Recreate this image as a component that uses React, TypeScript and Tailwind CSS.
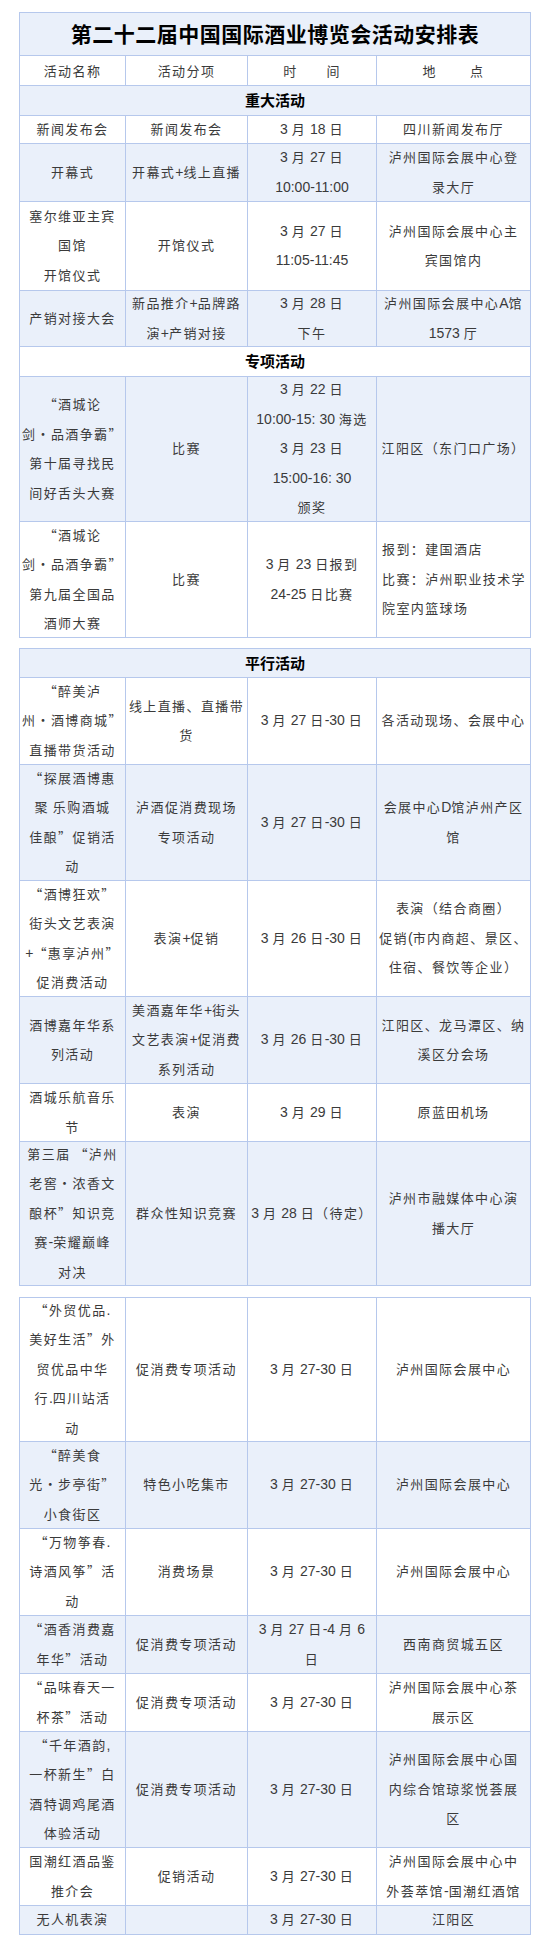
import React from "react";

type Cell = string | string[];
type RowT =
  | { kind: "row"; h: string; blue: boolean; cells: Cell[]; leftLast?: boolean }
  | { kind: "section"; h: string; blue: boolean; text: string }
  | { kind: "title"; h: string; text: string }
  | { kind: "header"; h: string };

const widths = ["w-[106px]", "w-[122px]", "w-[129px]", "flex-1 min-w-0"];

function Mixed({ s }: { s: string }) {
  const parts = s.split(/([\x00-\x7F]+)/).filter((p) => p.length > 0);
  return (
    <>
      {parts.map((p, i) =>
        /^[\x00-\x7F]+$/.test(p) ? (
          <span key={i} className="text-[14px] tracking-normal font-['Liberation_Sans',sans-serif]">
            {p}
          </span>
        ) : (
          <span key={i} className="font-['Noto_Sans_CJK_SC',sans-serif]">
            {p}
          </span>
        )
      )}
    </>
  );
}

function DataRow({ r }: { r: Extract<RowT, { kind: "row" }> }) {
  return (
    <div className={`flex ${r.h} ${r.blue ? "bg-[#eaf0fa]" : "bg-white"}`}>
      {r.cells.map((c, i) => {
        const lines = Array.isArray(c) ? c : [c];
        const left = r.leftLast && i === 3;
        return (
          <div
            key={i}
            className={`${widths[i]} border-r border-b border-[#b6c8ec] flex flex-col justify-center ${
              left ? "items-start text-left pl-[5px]" : "items-center text-center"
            } leading-[28.5px]`}
          >
            {lines.map((l, j) => (
              <div key={j} className="whitespace-nowrap">
                <Mixed s={l} />
              </div>
            ))}
          </div>
        );
      })}
    </div>
  );
}

function Table({ rows }: { rows: RowT[] }) {
  return (
    <div className="border-l border-t border-[#b6c8ec]">
      {rows.map((r, idx) => {
        if (r.kind === "row") return <DataRow key={idx} r={r} />;
        if (r.kind === "title")
          return (
            <div
              key={idx}
              className={`${r.h} bg-[#eaf0fa] border-r border-b border-[#b6c8ec] flex items-center justify-center text-[21px] font-bold text-black tracking-[0.5px] font-['Noto_Sans_CJK_SC',sans-serif]`}
            >
              {r.text}
            </div>
          );
        if (r.kind === "section")
          return (
            <div
              key={idx}
              className={`${r.h} ${r.blue ? "bg-[#eaf0fa]" : "bg-white"} border-r border-b border-[#b6c8ec] flex items-center justify-center text-[15px] font-bold text-black tracking-normal font-['Noto_Sans_CJK_SC',sans-serif]`}
            >
              {r.text}
            </div>
          );
        return (
          <div key={idx} className={`flex ${r.h} bg-white`}>
            {["活动名称", "活动分项", "时　　间", "地　　 点"].map((t, i) => (
              <div
                key={i}
                className={`${widths[i]} border-r border-b border-[#b6c8ec] flex items-center justify-center whitespace-pre font-['Noto_Sans_CJK_SC',sans-serif]`}
              >
                {t}
              </div>
            ))}
          </div>
        );
      })}
    </div>
  );
}

const t1: RowT[] = [
  { kind: "title", h: "h-[43px]", text: "第二十二届中国国际酒业博览会活动安排表" },
  { kind: "header", h: "h-[30px]" },
  { kind: "section", h: "h-[30px]", blue: true, text: "重大活动" },
  { kind: "row", h: "h-[28px]", blue: false, cells: ["新闻发布会", "新闻发布会", "3 月 18 日", "四川新闻发布厅"] },
  {
    kind: "row",
    h: "h-[58px]",
    blue: true,
    cells: ["开幕式", "开幕式+线上直播", ["3 月 27 日", "10:00-11:00"], ["泸州国际会展中心登", "录大厅"]],
  },
  {
    kind: "row",
    h: "h-[89px]",
    blue: false,
    cells: [["塞尔维亚主宾", "国馆", "开馆仪式"], "开馆仪式", ["3 月 27 日", "11:05-11:45"], ["泸州国际会展中心主", "宾国馆内"]],
  },
  {
    kind: "row",
    h: "h-[56px]",
    blue: true,
    cells: ["产销对接大会", ["新品推介+品牌路", "演+产销对接"], ["3 月 28 日", "下午"], ["泸州国际会展中心A馆", "1573 厅"]],
  },
  { kind: "section", h: "h-[30px]", blue: false, text: "专项活动" },
  {
    kind: "row",
    h: "h-[145px]",
    blue: true,
    cells: [
      ["“酒城论", "剑•品酒争霸”", "第十届寻找民", "间好舌头大赛"],
      "比赛",
      ["3 月 22 日", "10:00-15: 30 海选", "3 月 23 日", "15:00-16: 30", "颁奖"],
      "江阳区（东门口广场）",
    ],
  },
  {
    kind: "row",
    h: "h-[116px]",
    blue: false,
    leftLast: true,
    cells: [
      ["“酒城论", "剑•品酒争霸”", "第九届全国品", "酒师大赛"],
      "比赛",
      ["3 月 23 日报到", "24-25 日比赛"],
      ["报到：建国酒店", "比赛：泸州职业技术学", "院室内篮球场"],
    ],
  },
];

const t2: RowT[] = [
  { kind: "section", h: "h-[29px]", blue: true, text: "平行活动" },
  {
    kind: "row",
    h: "h-[87px]",
    blue: false,
    cells: [["“醉美泸", "州•酒博商城”", "直播带货活动"], ["线上直播、直播带", "货"], "3 月 27 日-30 日", "各活动现场、会展中心"],
  },
  {
    kind: "row",
    h: "h-[116px]",
    blue: true,
    cells: [
      ["“探展酒博惠", "聚 乐购酒城", "佳酿”促销活", "动"],
      ["泸酒促消费现场", "专项活动"],
      "3 月 27 日-30 日",
      ["会展中心D馆泸州产区", "馆"],
    ],
  },
  {
    kind: "row",
    h: "h-[116px]",
    blue: false,
    cells: [
      ["“酒博狂欢”", "街头文艺表演", "+“惠享泸州”", "促消费活动"],
      "表演+促销",
      "3 月 26 日-30 日",
      ["表演（结合商圈）", "促销(市内商超、景区、", "住宿、餐饮等企业）"],
    ],
  },
  {
    kind: "row",
    h: "h-[87px]",
    blue: true,
    cells: [
      ["酒博嘉年华系", "列活动"],
      ["美酒嘉年华+街头", "文艺表演+促消费", "系列活动"],
      "3 月 26 日-30 日",
      ["江阳区、龙马潭区、纳", "溪区分会场"],
    ],
  },
  {
    kind: "row",
    h: "h-[58px]",
    blue: false,
    cells: [["酒城乐航音乐", "节"], "表演", "3 月 29 日", "原蓝田机场"],
  },
  {
    kind: "row",
    h: "h-[144px]",
    blue: true,
    cells: [
      ["第三届 “泸州", "老窖•浓香文", "酿杯”知识竞", "赛-荣耀巅峰", "对决"],
      "群众性知识竞赛",
      "3 月 28 日（待定）",
      ["泸州市融媒体中心演", "播大厅"],
    ],
  },
];

const t3: RowT[] = [
  {
    kind: "row",
    h: "h-[144px]",
    blue: false,
    cells: [
      ["“外贸优品.", "美好生活”外", "贸优品中华", "行.四川站活", "动"],
      "促消费专项活动",
      "3 月 27-30 日",
      "泸州国际会展中心",
    ],
  },
  {
    kind: "row",
    h: "h-[87px]",
    blue: true,
    cells: [["“醉美食", "光•步亭街”", "小食街区"], "特色小吃集市", "3 月 27-30 日", "泸州国际会展中心"],
  },
  {
    kind: "row",
    h: "h-[87px]",
    blue: false,
    cells: [["“万物筝春.", "诗酒风筝”活", "动"], "消费场景", "3 月 27-30 日", "泸州国际会展中心"],
  },
  {
    kind: "row",
    h: "h-[58px]",
    blue: true,
    cells: [["“酒香消费嘉", "年华”活动"], "促消费专项活动", ["3 月 27 日-4 月 6", "日"], "西南商贸城五区"],
  },
  {
    kind: "row",
    h: "h-[58px]",
    blue: false,
    cells: [["“品味春天一", "杯茶”活动"], "促消费专项活动", "3 月 27-30 日", ["泸州国际会展中心茶", "展示区"]],
  },
  {
    kind: "row",
    h: "h-[116px]",
    blue: true,
    cells: [
      ["“千年酒韵,", "一杯新生”白", "酒特调鸡尾酒", "体验活动"],
      "促消费专项活动",
      "3 月 27-30 日",
      ["泸州国际会展中心国", "内综合馆琼浆悦荟展", "区"],
    ],
  },
  {
    kind: "row",
    h: "h-[58px]",
    blue: false,
    cells: [["国潮红酒品鉴", "推介会"], "促销活动", "3 月 27-30 日", ["泸州国际会展中心中", "外荟萃馆-国潮红酒馆"]],
  },
  { kind: "row", h: "h-[29px]", blue: true, cells: ["无人机表演", "", "3 月 27-30 日", "江阳区"] },
];

export default function App() {
  return (
    <div
      className="w-[550px] min-h-[1959px] bg-white pt-[12px] px-[19px] text-[13px] tracking-[1.4px] text-[#3a3a3a]"
      style={{ fontFamily: '"Liberation Sans", "Noto Sans CJK SC", sans-serif' }}
    >
      <Table rows={t1} />
      <div className="h-[10px]" />
      <Table rows={t2} />
      <div className="h-[11px]" />
      <Table rows={t3} />
    </div>
  );
}
